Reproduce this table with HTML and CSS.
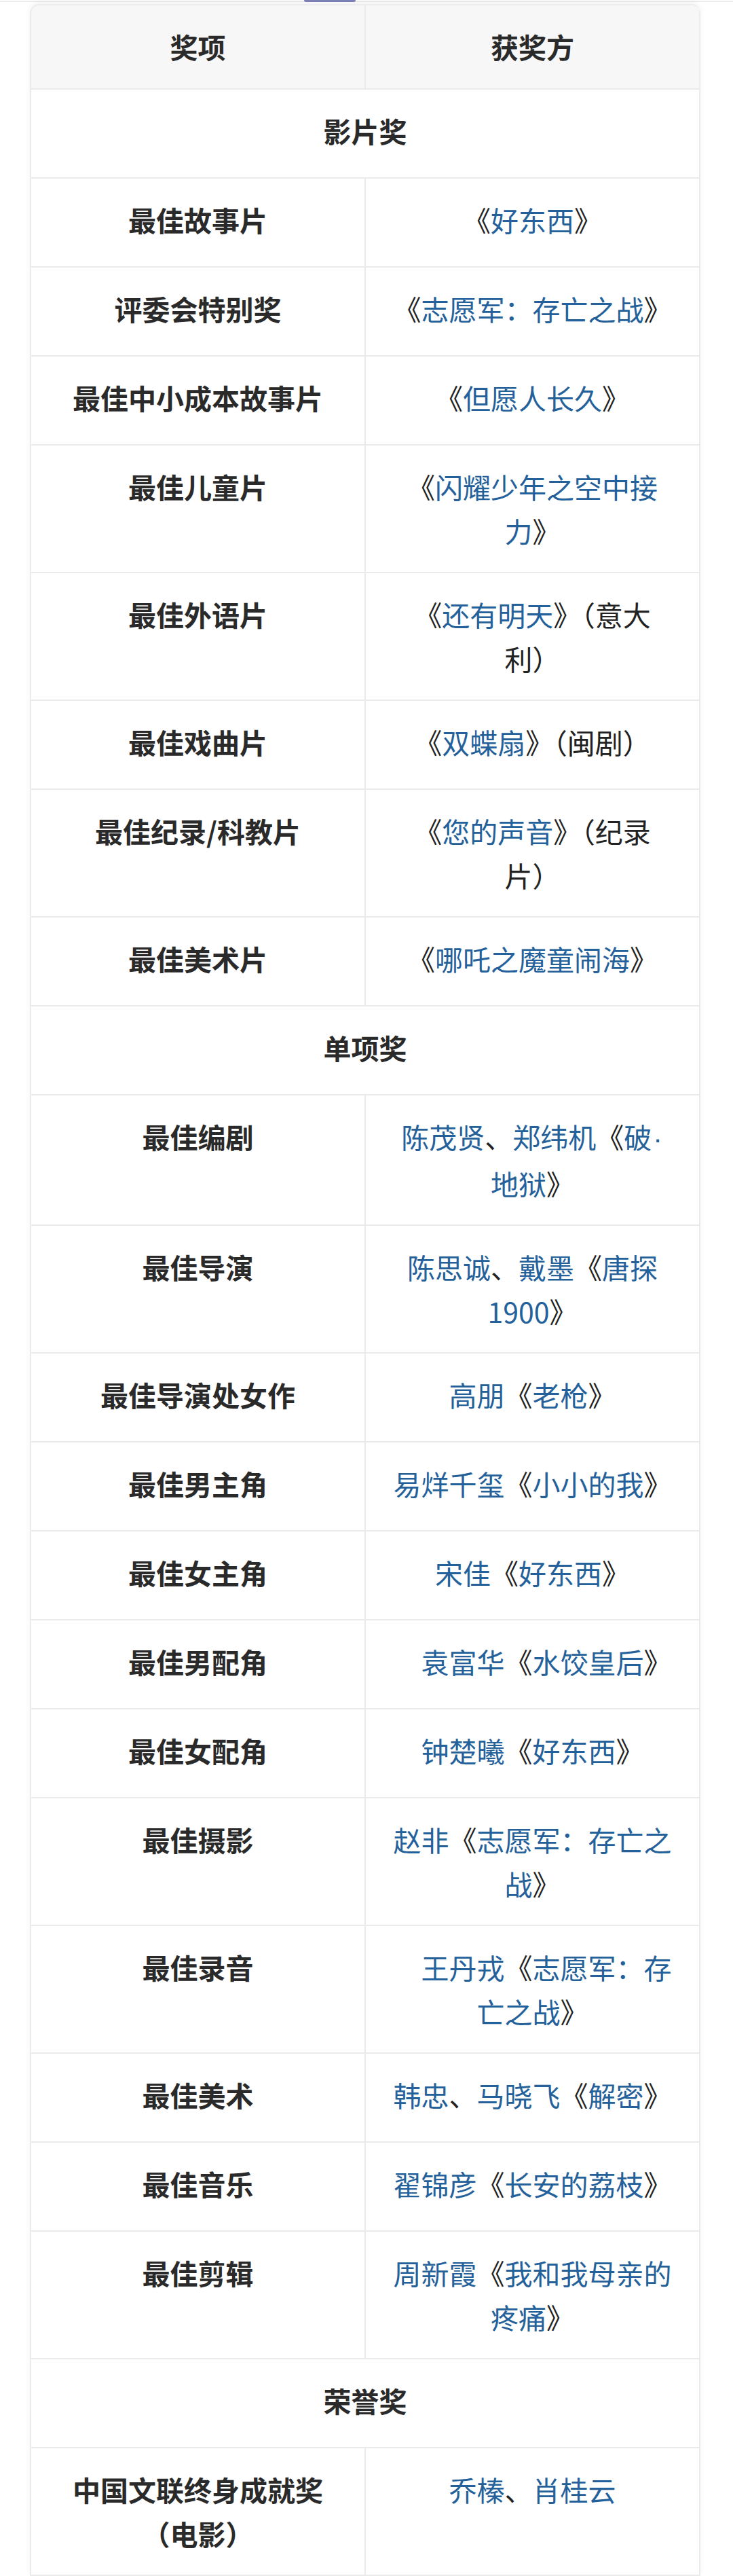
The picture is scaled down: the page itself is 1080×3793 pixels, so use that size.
FILE: index.html
```html
<!DOCTYPE html>
<html lang="zh-CN">
<head>
<meta charset="utf-8">
<title>奖项</title>
<link rel="stylesheet" href="styles.css">
</head>
<body>
<div class="topbar"><span class="pill"></span></div>
<div class="table">
  <div class="cell head">奖项</div>
  <div class="cell head">获奖方</div>

  <div class="cell sec">影片奖</div>

  <div class="cell name">最佳故事片</div>
  <div class="cell win">《<a>好东西</a>》</div>

  <div class="cell name">评委会特别奖</div>
  <div class="cell win">《<a>志愿军：存亡之战</a>》</div>

  <div class="cell name">最佳中小成本故事片</div>
  <div class="cell win">《<a>但愿人长久</a>》</div>

  <div class="cell name">最佳儿童片</div>
  <div class="cell win">《<a>闪耀少年之空中接力</a>》</div>

  <div class="cell name">最佳外语片</div>
  <div class="cell win">《<a>还有明天</a>》（意大<br>利）</div>

  <div class="cell name">最佳戏曲片</div>
  <div class="cell win">《<a>双蝶扇</a>》（闽剧）</div>

  <div class="cell name">最佳纪录/科教片</div>
  <div class="cell win">《<a>您的声音</a>》（纪录<br>片）</div>

  <div class="cell name">最佳美术片</div>
  <div class="cell win">《<a>哪吒之魔童闹海</a>》</div>

  <div class="cell sec">单项奖</div>

  <div class="cell name">最佳编剧</div>
  <div class="cell win"><a>陈茂贤</a>、<a>郑纬机</a>《<a>破<span class="dot">·</span>地狱</a>》</div>

  <div class="cell name">最佳导演</div>
  <div class="cell win"><a>陈思诚</a>、<a>戴墨</a>《<a>唐探1900</a>》</div>

  <div class="cell name">最佳导演处女作</div>
  <div class="cell win"><a>高朋</a>《<a>老枪</a>》</div>

  <div class="cell name">最佳男主角</div>
  <div class="cell win"><a>易烊千玺</a>《<a>小小的我</a>》</div>

  <div class="cell name">最佳女主角</div>
  <div class="cell win"><a>宋佳</a>《<a>好东西</a>》</div>

  <div class="cell name">最佳男配角</div>
  <div class="cell win">　<a>袁富华</a>《<a>水饺皇后</a>》</div>

  <div class="cell name">最佳女配角</div>
  <div class="cell win"><a>钟楚曦</a>《<a>好东西</a>》</div>

  <div class="cell name">最佳摄影</div>
  <div class="cell win"><a>赵非</a>《<a>志愿军：存亡之战</a>》</div>

  <div class="cell name">最佳录音</div>
  <div class="cell win">　<a>王丹戎</a>《<a>志愿军：存亡之战</a>》</div>

  <div class="cell name">最佳美术</div>
  <div class="cell win"><a>韩忠</a>、<a>马晓飞</a>《<a>解密</a>》</div>

  <div class="cell name">最佳音乐</div>
  <div class="cell win"><a>翟锦彦</a>《<a>长安的荔枝</a>》</div>

  <div class="cell name">最佳剪辑</div>
  <div class="cell win"><a>周新霞</a>《<a>我和我母亲的疼痛</a>》</div>

  <div class="cell sec">荣誉奖</div>

  <div class="cell name">中国文联终身成就奖（电影）</div>
  <div class="cell win"><a>乔榛</a>、<a>肖桂云</a></div>
</div>
</body>
</html>
```

FILE: styles.css
```css
* {
  box-sizing: border-box;
}

html, body {
  margin: 0;
  padding: 0;
  background: #ffffff;
}

body {
  font-family: "Noto Sans CJK SC", "Noto Sans", sans-serif;
  color: #2c2c2c;
}

.topbar {
  height: 3px;
  border-bottom: 1px solid #e4e4e4;
  display: flex;
  background: #fbfbfb;
}

.pill {
  display: block;
  width: 76px;
  height: 3px;
  margin-left: 448px;
  background: #7c80b6;
  border-radius: 0 0 3px 3px;
}

.table {
  display: grid;
  grid-template-columns: 1fr 1fr;
  width: 988px;
  margin: 3px 0 0 44px;
  border-left: 2px solid #ebebeb;
  border-top: 2px solid #ececec;
  border-radius: 14px 14px 0 0;
  overflow: hidden;
  box-shadow: 0 -3px 10px rgba(0, 0, 0, 0.05);
}

.cell {
  min-height: 131px;
  padding: 28px 37px;
  border-right: 2px solid #ebebeb;
  border-bottom: 2px solid #ebebeb;
  font-size: 41px;
  line-height: 65px;
  text-align: center;
}

.head {
  min-height: 124px;
  padding-top: 28px;
  background: #f7f7f7;
  font-weight: 700;
  color: #2a2a2a;
}

.sec {
  grid-column: 1 / -1;
  font-weight: 700;
  color: #2a2a2a;
}

.name {
  font-weight: 700;
  color: #2a2a2a;
}

.win {
  font-weight: 400;
  color: #222222;
}

.win a {
  color: #24619b;
  text-decoration: none;
}

.dot {
  font-family: "Liberation Sans", sans-serif;
  padding: 0 2px;
}
```
